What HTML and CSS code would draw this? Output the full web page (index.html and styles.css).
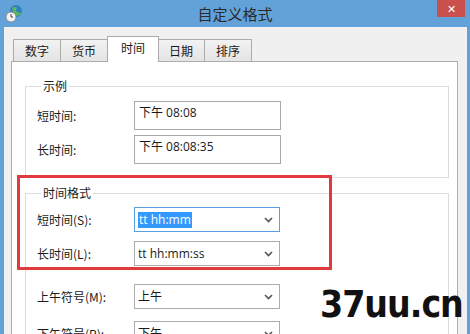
FILE: index.html
```html
<!DOCTYPE html>
<html>
<head>
    <title>自定义格式</title>
    <link rel="stylesheet" href="styles.css">
</head>
<body>
<div class="window">
    <div class="titlebar">
        <svg class="app-icon" width="18" height="20" viewBox="0 0 18 20">
            <circle cx="11" cy="7" r="6" fill="#2f7fc4"/>
            <path d="M7 4 Q10 2 12 4 Q10 6 12 8 Q14 10 16 8 L16 10 Q13 13 10 11 Q8 9 7 4 Z" fill="#5cb85c"/>
            <circle cx="6" cy="13" r="5" fill="#f4f4f4" stroke="#8a8a8a" stroke-width="1"/>
            <path d="M6 10 V13 H8" fill="none" stroke="#444" stroke-width="1"/>
        </svg>
        <div class="title">自定义格式</div>
        <div class="close">✕</div>
    </div>
    <div class="client">
        <div class="tabs">
            <div class="tab">数字</div>
            <div class="tab">货币</div>
            <div class="tab active">时间</div>
            <div class="tab">日期</div>
            <div class="tab">排序</div>
        </div>
        <div class="panel">
            <fieldset class="group sample">
                <legend>示例</legend>
                <div class="row first">
                    <label>短时间:</label>
                    <div class="textbox">下午 08:08</div>
                </div>
                <div class="row">
                    <label>长时间:</label>
                    <div class="textbox">下午 08:08:35</div>
                </div>
            </fieldset>
            <fieldset class="group formats">
                <legend>时间格式</legend>
                <div class="row first">
                    <label>短时间(S):</label>
                    <div class="combo focused"><span class="selected">tt hh:mm</span><svg class="arrow" width="9" height="6" viewBox="0 0 9 6"><polyline points="1,1 4.5,4.5 8,1" fill="none" stroke="#555" stroke-width="1.6"/></svg></div>
                </div>
                <div class="row second">
                    <label>长时间(L):</label>
                    <div class="combo"><span>tt hh:mm:ss</span><svg class="arrow" width="9" height="6" viewBox="0 0 9 6"><polyline points="1,1 4.5,4.5 8,1" fill="none" stroke="#555" stroke-width="1.6"/></svg></div>
                </div>
                <div class="row third">
                    <label>上午符号(M):</label>
                    <div class="combo"><span>上午</span><svg class="arrow" width="9" height="6" viewBox="0 0 9 6"><polyline points="1,1 4.5,4.5 8,1" fill="none" stroke="#555" stroke-width="1.6"/></svg></div>
                </div>
                <div class="row fourth">
                    <label>下午符号(P):</label>
                    <div class="combo"><span>下午</span><svg class="arrow" width="9" height="6" viewBox="0 0 9 6"><polyline points="1,1 4.5,4.5 8,1" fill="none" stroke="#555" stroke-width="1.6"/></svg></div>
                </div>
            </fieldset>
        </div>
    </div>
    <!-- annotation drawn over the dialog -->
    <div class="highlight"></div>
    <div class="watermark">37uu.cn</div>
</div>
</body>
</html>
```

FILE: styles.css
```css
body {
    margin: 0;
    font-family: "Open Sans", "Noto Sans CJK SC", sans-serif;
    font-size: 12px;
    color: #1a1a1a;
}

.window {
    position: relative;
    width: 470px;
    height: 334px;
    overflow: hidden;
    background-color: #63a2d9;
    display: flex;
    flex-direction: column;
}

/* title bar */
.titlebar {
    height: 27px;
    display: grid;
    grid-template-columns: 1fr auto 1fr;
    align-items: center;
}

.app-icon {
    margin-left: 5px;
    justify-self: start;
}

.title {
    font-family: "Noto Sans CJK SC", sans-serif;
    font-size: 15px;
    color: #2a2a2a;
    line-height: 27px;
}

.close {
    justify-self: end;
    align-self: start;
    width: 28px;
    height: 17px;
    margin-right: 5px;
    background-color: #c9504c;
    color: #fff;
    font-size: 11px;
    line-height: 17px;
    text-align: center;
}

/* dialog body */
.client {
    flex: 1;
    margin: 0 3px 0 4px;
    padding: 9px 9px 0 7px;
    background-color: #f0f0f0;
    display: flex;
    flex-direction: column;
}

.tabs {
    display: flex;
    align-items: flex-end;
    height: 25px;
    padding-left: 2px;
}

.tab {
    height: 21px;
    line-height: 21px;
    padding: 0 11px;
    border: 1px solid #acacac;
    border-bottom: none;
    background: linear-gradient(#f2f2f2, #e4e4e4);
    margin-left: -1px;
    font-family: "Noto Sans CJK SC", sans-serif;
}

.tab:first-child {
    margin-left: 0;
}

.tab.active {
    height: 25px;
    line-height: 21px;
    padding: 0 13px;
    margin-right: -1px;
    margin-bottom: -1px;
    background: #fff;
    position: relative;
    z-index: 1;
}

.panel {
    flex: 1;
    background-color: #fff;
    border: 1px solid #acacac;
    border-bottom: none;
    padding: 0 8px 0 13px;
}

/* group boxes */
.group {
    margin: 16px 0 0;
    padding: 0 0 13px 11px;
    border: 1px solid #dcdcdc;
    min-width: 0;
}

.group.formats {
    margin-top: 7px;
}

.group legend {
    margin-left: 4px;
    padding: 0 2px;
    line-height: 16px;
    font-family: "Noto Sans CJK SC", sans-serif;
}

.row {
    display: flex;
    align-items: center;
    margin-top: 5px;
}

.row.first {
    margin-top: 7px;
}

.formats .row.first {
    margin-top: 6px;
}

.formats .row.second {
    margin-top: 9px;
}

.formats .row.third {
    margin-top: 18px;
}

.formats .row.fourth {
    margin-top: 12px;
}

.row label {
    width: 97px;
    font-family: "Noto Sans CJK SC", sans-serif;
    line-height: 16px;
}

.textbox {
    box-sizing: border-box;
    width: 147px;
    height: 29px;
    border: 1px solid #a9a9a9;
    padding: 3px 4px;
    line-height: 16px;
}

.combo {
    box-sizing: border-box;
    width: 146px;
    height: 25px;
    border: 1px solid #acacac;
    padding: 0 6px 0 3px;
    display: flex;
    align-items: center;
    justify-content: space-between;
    line-height: 16px;
}

.combo.focused {
    border-color: #5a9fe0;
}

.selected {
    background-color: #3399ff;
    color: #fff;
    padding: 0 1px;
}

/* red annotation frame */
.highlight {
    position: absolute;
    left: 17px;
    top: 175px;
    width: 309px;
    height: 89px;
    border: 3px solid #e0393e;
}

.watermark {
    position: absolute;
    left: 320px;
    top: 283px;
    font-family: "DejaVu Sans Condensed", "DejaVu Sans", sans-serif;
    font-weight: bold;
    font-size: 37px;
    letter-spacing: -1px;
    line-height: 44px;
    color: #111;
}
```
